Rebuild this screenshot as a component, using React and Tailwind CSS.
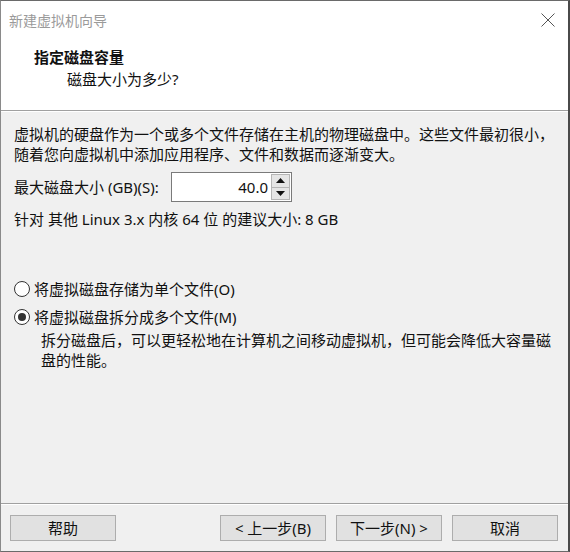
import React, { useState } from 'react';

const font = { fontFamily: '"Noto Sans", "Noto Sans CJK SC", sans-serif' };

const Radio = ({ checked, label, onClick }) => (
  <div className="flex items-center h-[20px] cursor-default" onClick={onClick}>
    <span className="w-[20px] flex justify-center ml-[11px]">
      <span className="w-[16px] h-[16px] rounded-full border border-[#333] bg-white flex items-center justify-center">
        {checked && <span className="w-[8px] h-[8px] rounded-full bg-[#333]" />}
      </span>
    </span>
    <span className="ml-[2px]">{label}</span>
  </div>
);

const Btn = ({ children, className = '' }) => (
  <button className={`h-[26px] bg-[#e1e1e1] border border-[#adadad] text-[15px] leading-none text-[#111] ${className}`}>
    {children}
  </button>
);

export default function App() {
  const [size, setSize] = useState(40.0);
  const [split, setSplit] = useState(true);

  return (
    <div
      className="w-[570px] h-[552px] flex flex-col bg-[#f0f0f0] border-l border-t border-b border-r-2 border-l-[#8a8a8a] border-t-[#6a6a6a] border-b-[#6a6a6a] border-r-[#4a4a4a] text-[15px] text-[#111] overflow-hidden"
      style={font}
    >
      {/* title + header */}
      <div className="bg-white h-[109px] shrink-0">
        <div className="flex items-center justify-between h-[38px] pl-[8px] pr-[13px]">
          <span className="text-[14px] text-[#9a9a9a]">新建虚拟机向导</span>
          <svg width="14" height="14" viewBox="0 0 14 14">
            <path d="M0.5 0.5 L13.5 13.5 M13.5 0.5 L0.5 13.5" stroke="#555" strokeWidth="1" fill="none" />
          </svg>
        </div>
        <div className="pl-[33px] leading-[22px]">
          <div className="font-bold text-[15px] mt-[7px]">指定磁盘容量</div>
          <div className="pl-[33px]">磁盘大小为多少?</div>
        </div>
      </div>
      <div className="h-[2px] shrink-0 border-t border-[#a0a0a0] bg-white" />

      {/* body */}
      <div className="flex-1 pl-[13px] pt-[12px] leading-[20px]">
        <p>虚拟机的硬盘作为一个或多个文件存储在主机的物理磁盘中。这些文件最初很小，</p>
        <p>随着您向虚拟机中添加应用程序、文件和数据而逐渐变大。</p>

        <div className="flex items-center mt-[8px]">
          <span className="w-[157px]">最大磁盘大小 (GB)(S):</span>
          <div className="flex w-[121px] h-[30px] border border-[#7a7a7a] bg-white">
            <input
              className="flex-1 min-w-0 text-right pr-[3px] outline-none bg-transparent"
              value={size.toFixed(1)}
              onChange={(e) => setSize(parseFloat(e.target.value) || 0)}
            />
            <div className="flex flex-col w-[19px] my-[1px] mr-[1px]">
              <button
                className="flex-1 bg-[#e5e5e5] border border-[#b5b5b5] flex items-center justify-center"
                onClick={() => setSize(size + 1)}
              >
                <svg width="9" height="5" viewBox="0 0 9 5"><path d="M0 5 L4.5 0 L9 5 Z" fill="#111" /></svg>
              </button>
              <button
                className="flex-1 bg-[#e5e5e5] border border-t-0 border-[#b5b5b5] flex items-center justify-center"
                onClick={() => setSize(Math.max(0, size - 1))}
              >
                <svg width="9" height="5" viewBox="0 0 9 5"><path d="M0 0 L9 0 L4.5 5 Z" fill="#111" /></svg>
              </button>
            </div>
          </div>
        </div>

        <p className="mt-[7px]">针对 其他 Linux 3.x 内核 64 位 的建议大小: 8 GB</p>

        <div className="mt-[50px] -ml-[13px]">
          <Radio checked={!split} label="将虚拟磁盘存储为单个文件(O)" onClick={() => setSplit(false)} />
          <div className="mt-[8px]">
            <Radio checked={split} label="将虚拟磁盘拆分成多个文件(M)" onClick={() => setSplit(true)} />
          </div>
          <div className="pl-[40px] mt-[3px]">
            <p>拆分磁盘后，可以更轻松地在计算机之间移动虚拟机，但可能会降低大容量磁</p>
            <p>盘的性能。</p>
          </div>
        </div>
      </div>

      {/* footer */}
      <div className="h-[2px] shrink-0 border-t border-[#a0a0a0] bg-white" />
      <div className="h-[46px] shrink-0 flex items-start pt-[10px] pl-[9px]">
        <Btn className="w-[106px]">帮助</Btn>
        <Btn className="w-[106px] ml-[104px]">&lt; 上一步(B)</Btn>
        <Btn className="w-[106px] ml-[10px]">下一步(N) &gt;</Btn>
        <Btn className="w-[106px] ml-[10px]">取消</Btn>
      </div>
    </div>
  );
}
